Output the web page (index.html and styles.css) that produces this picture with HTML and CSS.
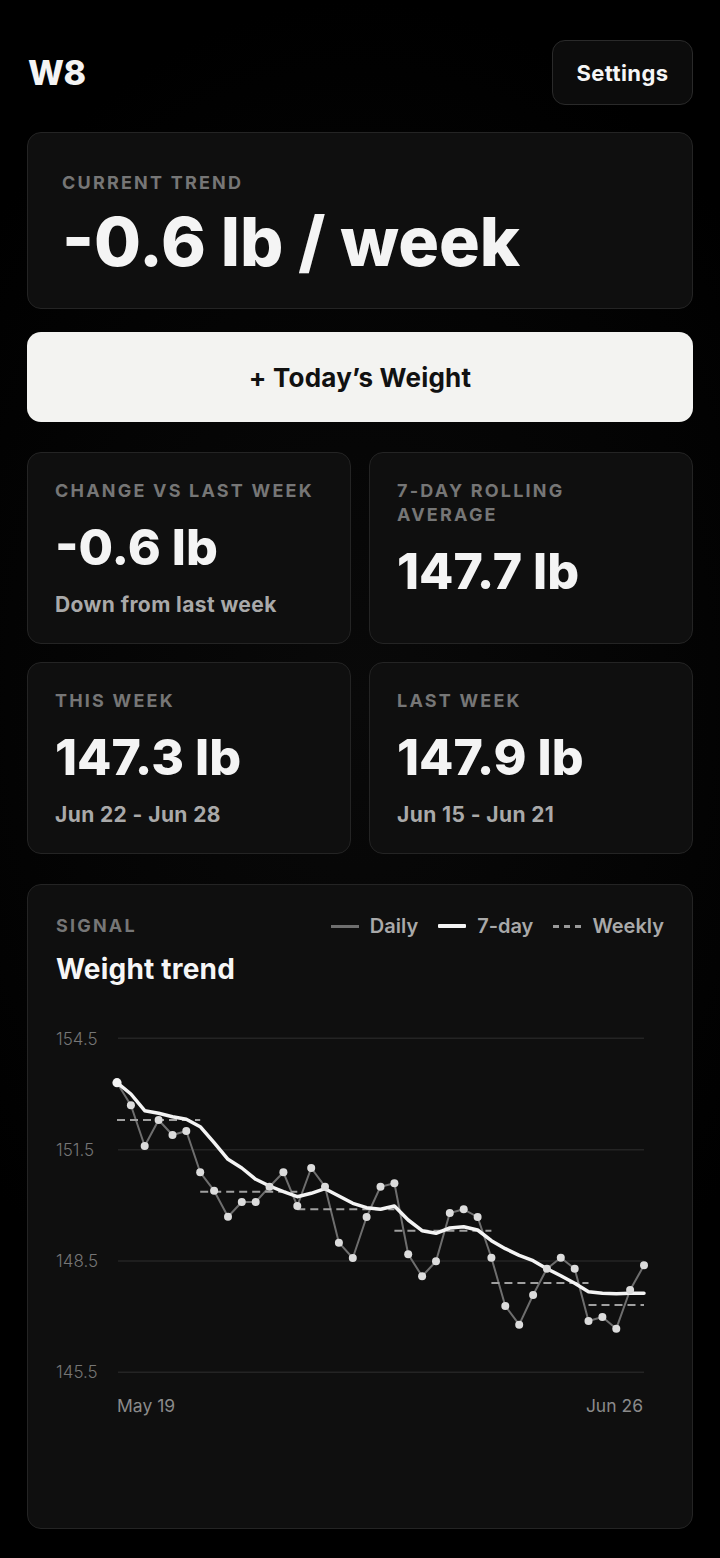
FILE: index.html
```html
<!DOCTYPE html>
<html lang="en">
<head>
<meta charset="utf-8">
<title>W8</title>
<link rel="stylesheet" href="styles.css">
</head>
<body>
<div class="app">
  <header class="top">
    <h1 class="logo">W8</h1>
    <button class="settings">Settings</button>
  </header>

  <section class="card trend">
    <div class="label">Current trend</div>
    <div class="trend-value">-0.6 lb / week</div>
  </section>

  <button class="add">+ Today’s Weight</button>

  <div class="stats">
    <div class="card stat">
      <div class="label">Change vs last week</div>
      <div class="stat-value">-0.6 lb</div>
      <div class="stat-sub">Down from last week</div>
    </div>
    <div class="card stat">
      <div class="label">7-day rolling<br>average</div>
      <div class="stat-value">147.7 lb</div>
    </div>
    <div class="card stat">
      <div class="label">This week</div>
      <div class="stat-value">147.3 lb</div>
      <div class="stat-sub">Jun 22 - Jun 28</div>
    </div>
    <div class="card stat">
      <div class="label">Last week</div>
      <div class="stat-value">147.9 lb</div>
      <div class="stat-sub">Jun 15 - Jun 21</div>
    </div>
  </div>

  <section class="card chart-card">
    <div class="chart-head">
      <div class="label">Signal</div>
      <div class="legend">
        <span class="sw sw-daily"></span><span class="lg-text">Daily</span>
        <span class="sw sw-7day"></span><span class="lg-text">7-day</span>
        <span class="sw sw-weekly"><i></i><i></i><i></i></span><span class="lg-text">Weekly</span>
      </div>
    </div>
    <h2 class="chart-title">Weight trend</h2>
    <svg class="chart" viewBox="0 0 610 488" width="610" height="488">
      <g class="grid">
        <line x1="62" y1="28.3" x2="588" y2="28.3"/>
        <line x1="62" y1="139.7" x2="588" y2="139.7"/>
        <line x1="62" y1="251" x2="588" y2="251"/>
        <line x1="62" y1="362.3" x2="588" y2="362.3"/>
      </g>
      <g class="ylab">
        <text x="0" y="34.5">154.5</text>
        <text x="0" y="145.8">151.5</text>
        <text x="0" y="257.1">148.5</text>
        <text x="0" y="368.4">145.5</text>
      </g>
      <g class="xlab">
        <text x="61" y="401.7">May 19</text>
        <text x="587" y="401.7" text-anchor="end">Jun 26</text>
      </g>
      <polyline class="daily" points="61,72.7 74.9,95.3 88.7,136 102.6,110 116.5,125 130.3,121 144.2,162.3 158.1,180.7 172,206.7 185.8,192 199.7,192 213.5,176.7 227.4,162.3 241.3,196 255.2,158 269,176.7 282.9,232.7 296.8,248 310.6,207 324.5,176.7 338.4,173.3 352.2,244.3 366.1,266.3 380,251.3 393.8,203 407.7,199.3 421.6,207 435.4,247.7 449.3,296 463.2,314.7 477.1,285 490.9,258.7 504.8,247.7 518.7,258.7 532.5,311 546.4,307 560.3,318.7 574.1,280 588,255.3"/>
      <g class="weekly">
        <line x1="61" y1="110" x2="144.2" y2="110"/>
        <line x1="144.2" y1="181.7" x2="241.3" y2="181.7"/>
        <line x1="241.3" y1="199.3" x2="338.4" y2="199.3"/>
        <line x1="338.4" y1="220.7" x2="435.4" y2="220.7"/>
        <line x1="435.4" y1="273" x2="532.5" y2="273"/>
        <line x1="532.5" y1="295" x2="588" y2="295"/>
      </g>
      <polyline class="rolling" points="61,72.7 74.9,84 88.7,100.7 102.6,103.3 116.5,106.7 130.3,109.3 144.2,116.7 158.1,132.7 172,149.3 185.8,158 199.7,169.3 213.5,176 227.4,181.7 241.3,186.7 255.2,183.3 269,178.7 282.9,186 296.8,193.3 310.6,197.7 324.5,199.3 338.4,196 352.2,210 366.1,220.7 380,223.3 393.8,218 407.7,216.7 421.6,220 435.4,230.7 449.3,238.7 463.2,245.3 477.1,250.7 490.9,258.7 504.8,265.7 518.7,273.3 532.5,281.7 546.4,283.3 560.3,283.7 574.1,283.3 588,283.3"/>
      <g class="dots">
        <circle cx="61" cy="72.7" r="4.6" class="first"/>
        <circle cx="74.9" cy="95.3" r="4"/>
        <circle cx="88.7" cy="136" r="4"/>
        <circle cx="102.6" cy="110" r="4"/>
        <circle cx="116.5" cy="125" r="4"/>
        <circle cx="130.3" cy="121" r="4"/>
        <circle cx="144.2" cy="162.3" r="4"/>
        <circle cx="158.1" cy="180.7" r="4"/>
        <circle cx="172" cy="206.7" r="4"/>
        <circle cx="185.8" cy="192" r="4"/>
        <circle cx="199.7" cy="192" r="4"/>
        <circle cx="213.5" cy="176.7" r="4"/>
        <circle cx="227.4" cy="162.3" r="4"/>
        <circle cx="241.3" cy="196" r="4"/>
        <circle cx="255.2" cy="158" r="4"/>
        <circle cx="269" cy="176.7" r="4"/>
        <circle cx="282.9" cy="232.7" r="4"/>
        <circle cx="296.8" cy="248" r="4"/>
        <circle cx="310.6" cy="207" r="4"/>
        <circle cx="324.5" cy="176.7" r="4"/>
        <circle cx="338.4" cy="173.3" r="4"/>
        <circle cx="352.2" cy="244.3" r="4"/>
        <circle cx="366.1" cy="266.3" r="4"/>
        <circle cx="380" cy="251.3" r="4"/>
        <circle cx="393.8" cy="203" r="4"/>
        <circle cx="407.7" cy="199.3" r="4"/>
        <circle cx="421.6" cy="207" r="4"/>
        <circle cx="435.4" cy="247.7" r="4"/>
        <circle cx="449.3" cy="296" r="4"/>
        <circle cx="463.2" cy="314.7" r="4"/>
        <circle cx="477.1" cy="285" r="4"/>
        <circle cx="490.9" cy="258.7" r="4"/>
        <circle cx="504.8" cy="247.7" r="4"/>
        <circle cx="518.7" cy="258.7" r="4"/>
        <circle cx="532.5" cy="311" r="4"/>
        <circle cx="546.4" cy="307" r="4"/>
        <circle cx="560.3" cy="318.7" r="4"/>
        <circle cx="574.1" cy="280" r="4"/>
        <circle cx="588" cy="255.3" r="4"/>
      </g>
    </svg>
  </section>
</div>
</body>
</html>
```

FILE: styles.css
```css
html, body {
  margin: 0;
  padding: 0;
}

body {
  background: #000;
  color: #f4f4f4;
  font-family: Inter, "Noto Sans", "Liberation Sans", sans-serif;
  min-height: 1558px;
}

.app {
  padding: 40px 27px 32px;
  background: radial-gradient(ellipse 70% 45% at 50% 45%, #090909 0%, #040404 60%, #000 100%);
  min-height: 1558px;
  box-sizing: border-box;
}

.top {
  display: flex;
  justify-content: space-between;
  align-items: center;
  height: 65px;
}

.logo {
  margin: 0 0 0 1px;
  font-size: 34px;
  line-height: 40px;
  font-weight: 800;
  letter-spacing: -0.5px;
}

.settings {
  width: 141px;
  height: 65px;
  border-radius: 13px;
  background: #0c0c0c;
  border: 1.5px solid #2a2a2a;
  color: #f6f6f6;
  font-family: Inter, "Noto Sans", sans-serif;
  font-size: 22px;
  font-weight: 700;
  letter-spacing: 0.4px;
  padding: 0;
}

.card {
  background: #0f0f0f;
  border: 1px solid #242424;
  border-radius: 14px;
  box-sizing: border-box;
}

.label {
  font-size: 18px;
  line-height: 24px;
  font-weight: 700;
  letter-spacing: 2.2px;
  text-transform: uppercase;
  color: #767676;
}

.trend {
  margin-top: 27px;
  height: 177px;
  padding: 38px 34px 0;
}

.trend-value {
  margin-top: 9px;
  font-size: 68px;
  line-height: 75px;
  font-weight: 800;
  letter-spacing: 0;
  color: #f4f4f4;
}

.add {
  display: block;
  margin-top: 23px;
  width: 100%;
  height: 90px;
  border: 0;
  border-radius: 14px;
  background: #f3f3f1;
  color: #111;
  font-family: Inter, "Noto Sans", sans-serif;
  font-size: 26px;
  font-weight: 700;
  letter-spacing: 0.2px;
}

.stats {
  margin-top: 30px;
  display: grid;
  grid-template-columns: 1fr 1fr;
  gap: 18px;
}

.stat {
  padding: 26px 27px 25px;
  display: flex;
  flex-direction: column;
  gap: 18px;
}

.stat-value {
  font-size: 50px;
  line-height: 53px;
  font-weight: 800;
  letter-spacing: 0;
  color: #f4f4f4;
}

.stat-sub {
  font-size: 21px;
  line-height: 26px;
  font-weight: 700;
  letter-spacing: 0.4px;
  color: #a9a9a9;
}

.chart-card {
  margin-top: 30px;
  padding: 29px 28px 30px;
}

.chart-head {
  display: flex;
  justify-content: space-between;
  align-items: center;
}

.legend {
  display: flex;
  align-items: center;
}

.sw {
  display: block;
  width: 28px;
  height: 3px;
  margin-right: 11px;
}

.sw-daily {
  background: #6f6f6f;
}

.sw-7day {
  background: #f4f4f4;
  height: 4px;
  border-radius: 1px;
}

.sw-weekly {
  display: flex;
  justify-content: space-between;
  height: 3px;
}

.sw-weekly i {
  display: block;
  width: 6px;
  height: 3px;
  background: #9a9a9a;
}

.lg-text {
  font-size: 20px;
  line-height: 24px;
  font-weight: 600;
  color: #a9a9a9;
  margin-right: 20px;
}

.lg-text:last-child {
  margin-right: 0;
}

.chart-title {
  margin: 15px 0 0;
  font-size: 28px;
  line-height: 32px;
  font-weight: 700;
  letter-spacing: 0.2px;
  color: #f6f6f6;
}

.chart {
  display: block;
  margin-top: 25px;
  width: 610px;
  height: 488px;
}

.grid line {
  stroke: #242424;
  stroke-width: 1.5;
}

.ylab text {
  font-family: Inter, "Noto Sans", sans-serif;
  font-size: 17px;
  font-weight: 300;
  fill: #767676;
}

.xlab text {
  font-family: Inter, "Noto Sans", sans-serif;
  font-size: 17.5px;
  font-weight: 400;
  fill: #8a8a8a;
}

.daily {
  fill: none;
  stroke: #6e6e6e;
  stroke-width: 2;
  stroke-linejoin: round;
}

.weekly line {
  stroke: #a0a0a0;
  stroke-width: 2;
  stroke-dasharray: 8 5;
}

.rolling {
  fill: none;
  stroke: #f4f4f4;
  stroke-width: 3.5;
  stroke-linejoin: round;
  stroke-linecap: round;
}

.dots circle {
  fill: #dcdcdc;
}

.dots .first {
  fill: #f4f4f4;
}
```
